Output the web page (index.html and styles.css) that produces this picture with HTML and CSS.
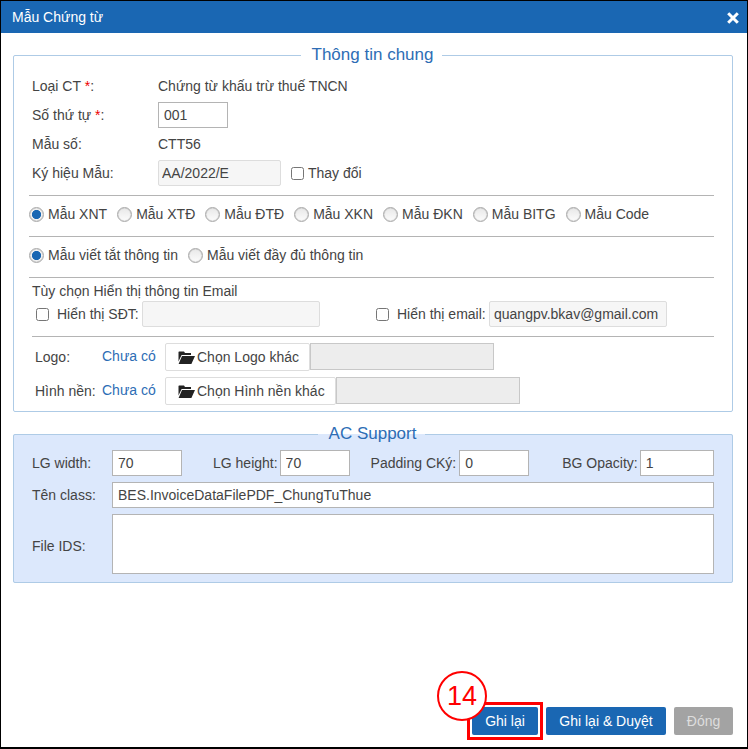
FILE: index.html
```html
<!DOCTYPE html>
<html lang="en">
<head>
    <meta charset="UTF-8">
    <meta name="viewport" content="width=device-width, initial-scale=1.0">
    <title>Mẫu Chứng từ</title>
    <link rel="stylesheet" href="styles.css">
</head>
<body>
    <div class="dialog">
        <div class="dialog-header">
            <span class="dialog-title">Mẫu Chứng từ</span>
            <svg class="close-icon" width="12" height="12" viewBox="0 0 12 12">
                <path d="M1.2 1.2L10.8 10.8M10.8 1.2L1.2 10.8" stroke="#fff" stroke-width="3" fill="none"/>
            </svg>
        </div>

        <fieldset class="group">
            <legend>Thông tin chung</legend>

            <div class="info-rows">
                <div class="row">
                    <span class="row-label">Loại CT <span class="req">*</span>:</span>
                    <span>Chứng từ khấu trừ thuế TNCN</span>
                </div>
                <div class="row">
                    <span class="row-label">Số thứ tự <span class="req">*</span>:</span>
                    <input class="field field-order" type="text" value="001">
                </div>
                <div class="row">
                    <span class="row-label">Mẫu số:</span>
                    <span>CTT56</span>
                </div>
                <div class="row">
                    <span class="row-label">Ký hiệu Mẫu:</span>
                    <input class="field field-readonly field-symbol" type="text" value="AA/2022/E" readonly>
                    <label class="check check-change"><input type="checkbox">Thay đổi</label>
                </div>
            </div>

            <div class="radio-row">
                <label class="radio"><input type="radio" name="tpl" checked>Mẫu XNT</label>
                <label class="radio"><input type="radio" name="tpl">Mẫu XTĐ</label>
                <label class="radio"><input type="radio" name="tpl">Mẫu ĐTĐ</label>
                <label class="radio"><input type="radio" name="tpl">Mẫu XKN</label>
                <label class="radio"><input type="radio" name="tpl">Mẫu ĐKN</label>
                <label class="radio"><input type="radio" name="tpl">Mẫu BITG</label>
                <label class="radio"><input type="radio" name="tpl">Mẫu Code</label>
            </div>

            <div class="radio-row">
                <label class="radio"><input type="radio" name="info" checked>Mẫu viết tắt thông tin</label>
                <label class="radio"><input type="radio" name="info">Mẫu viết đầy đủ thông tin</label>
            </div>

            <div class="email-block">
                <div class="email-title">Tùy chọn Hiển thị thông tin Email</div>
                <div class="email-row">
                    <label class="check check-phone"><input type="checkbox">Hiển thị SĐT:</label>
                    <input class="field field-readonly field-contact" type="text" readonly>
                    <label class="check check-email"><input type="checkbox">Hiển thị email:</label>
                    <input class="field field-readonly field-contact" type="text" value="quangpv.bkav@gmail.com" readonly>
                </div>
            </div>

            <div class="upload-block">
                <div class="upload-row">
                    <span class="upload-label">Logo:</span>
                    <a class="upload-link">Chưa có</a>
                    <button class="upload-btn" type="button">
                        <svg width="17" height="13" viewBox="0 0 17 13"><path d="M1 0.5h5l1 1.5h6v2H3.6L0.5 10.5V1zM4 5h13l-3.6 8H0.6z" fill="#222"/></svg>Chọn Logo khác
                    </button>
                    <input class="upload-path" type="text" readonly>
                </div>
                <div class="upload-row">
                    <span class="upload-label">Hình nền:</span>
                    <a class="upload-link">Chưa có</a>
                    <button class="upload-btn" type="button">
                        <svg width="17" height="13" viewBox="0 0 17 13"><path d="M1 0.5h5l1 1.5h6v2H3.6L0.5 10.5V1zM4 5h13l-3.6 8H0.6z" fill="#222"/></svg>Chọn Hình nền khác
                    </button>
                    <input class="upload-path" type="text" readonly>
                </div>
            </div>
        </fieldset>

        <fieldset class="group group-support">
            <legend>AC Support</legend>

            <div class="support-row">
                <span class="support-label">LG width:</span>
                <input class="field field-size" type="text" value="70">
                <span class="support-label-inline label-height">LG height:</span>
                <input class="field field-size" type="text" value="70">
                <span class="support-label-inline label-padding">Padding CKý:</span>
                <input class="field field-size" type="text" value="0">
                <span class="support-label-inline label-opacity">BG Opacity:</span>
                <input class="field field-opacity" type="text" value="1">
            </div>
            <div class="support-row">
                <span class="support-label">Tên class:</span>
                <input class="field field-wide" type="text" value="BES.InvoiceDataFilePDF_ChungTuThue">
            </div>
            <div class="support-row">
                <span class="support-label label-ids">File IDS:</span>
                <textarea class="field field-wide field-ids"></textarea>
            </div>
        </fieldset>

        <div class="dialog-footer">
            <span class="step-badge">14</span>
            <button class="btn btn-marked" type="button">Ghi lại</button>
            <button class="btn btn-approve" type="button">Ghi lại &amp; Duyệt</button>
            <button class="btn btn-disabled" type="button">Đóng</button>
        </div>
    </div>
</body>
</html>
```

FILE: styles.css
```css
* {
    box-sizing: border-box;
}

html, body {
    height: 100%;
}

body {
    margin: 0;
    font-family: 'Liberation Sans', Arial, sans-serif;
    font-size: 14px;
    color: #444;
    background-color: #fff;
}

.dialog {
    display: flex;
    flex-direction: column;
    height: 749px;
    border: 1px solid #000;
    border-bottom-width: 2px;
}

.dialog-header {
    display: flex;
    justify-content: space-between;
    align-items: center;
    height: 32px;
    padding: 0 8px 0 11px;
    background-color: #1a67b3;
    color: #fff;
}

.close-icon {
    margin-top: 1px;
}

.group {
    width: 720px;
    min-width: 0;
    margin: 12px 0 0 12px;
    padding: 8px 18px 6px 15px;
    border: 1px solid #aecbe6;
    border-radius: 2px;
}

.group legend {
    margin: 0 auto;
    padding: 0 9px 0 11px;
    font-size: 17px;
    line-height: 20px;
    color: #2d6db5;
}

.group-support {
    margin-top: 12px;
    padding: 6px 18px 8px 15px;
    background-color: #dce8fc;
}

.info-rows {
    display: flex;
    flex-direction: column;
    gap: 3px;
    padding-bottom: 9px;
    border-bottom: 1px solid #b4b4b4;
}

.row {
    display: flex;
    align-items: center;
    height: 26px;
    padding-left: 3px;
}

.row-label {
    width: 126px;
}

.req {
    color: #e00;
}

.field {
    height: 26px;
    padding: 0 5px;
    border: 1px solid #b4b4b4;
    font-family: inherit;
    font-size: 14px;
    color: #444;
    background-color: #fff;
}

.field-order {
    width: 70px;
}

.field-readonly {
    padding: 0 4px;
    border: 1px solid #ddd;
    border-radius: 2px;
    background-color: #f6f6f6;
}

.field-symbol {
    width: 123px;
    padding: 0 3px;
}

.check {
    display: flex;
    align-items: center;
}

.check input {
    width: 13px;
    height: 13px;
    margin: 0;
}

.check-change {
    margin-left: 10px;
    gap: 4px;
}

.radio-row {
    display: flex;
    align-items: center;
    gap: 10px;
    height: 41px;
    padding-bottom: 4px;
    border-bottom: 1px solid #b4b4b4;
}

.radio {
    display: flex;
    align-items: center;
    gap: 4px;
}

.radio input {
    appearance: none;
    width: 15px;
    height: 15px;
    margin: 0;
    border: 1px solid #aaa;
    border-radius: 50%;
    background: linear-gradient(#e8e8e8, #fcfcfc);
    box-shadow: inset 0 0 1px #888;
}

.radio input:checked {
    background: radial-gradient(circle, #1a67b3 0, #1a67b3 4.2px, #f2f2f2 5px);
}

.email-block {
    margin-left: 3px;
    padding-bottom: 9px;
    border-bottom: 1px solid #b4b4b4;
}

.email-title {
    height: 23px;
    padding-top: 3px;
    line-height: 20px;
}

.email-row {
    display: flex;
    align-items: center;
    height: 26px;
}

.check-phone {
    gap: 8px;
    width: 106px;
    margin-left: 4px;
}

.check-email {
    gap: 8px;
    width: 113px;
    margin-left: 56px;
}

.field-contact {
    width: 178px;
}

.upload-block {
    display: flex;
    flex-direction: column;
    gap: 6px;
    padding-top: 6px;
}

.upload-row {
    display: flex;
    align-items: flex-start;
    height: 28px;
}

.upload-label {
    width: 73px;
    padding-left: 6px;
    line-height: 28px;
}

.upload-link {
    width: 63px;
    line-height: 26px;
    color: #2d6db5;
}

.upload-btn {
    display: flex;
    align-items: center;
    gap: 2px;
    height: 28px;
    padding: 0 10px 0 12px;
    border: 1px solid #ddd;
    border-radius: 2px;
    background-color: #fff;
    font-family: inherit;
    font-size: 14px;
    color: #444;
}

.upload-path {
    width: 184px;
    height: 27px;
    border: 1px solid #c8c8c8;
    background-color: #ededed;
}

.support-row {
    display: flex;
    align-items: center;
    margin-bottom: 6px;
    padding-left: 3px;
    white-space: nowrap;
}

.support-row:last-child {
    margin-bottom: 0;
}

.support-label {
    flex-shrink: 0;
    width: 80px;
}

.label-ids {
    margin-top: 4px;
}

.support-label-inline {
    flex-shrink: 0;
    margin-right: 2px;
}

.label-height {
    margin-left: 31px;
}

.label-padding {
    margin-left: 21px;
    margin-right: 3px;
}

.label-opacity {
    margin-left: 33px;
}

.field-size {
    flex-shrink: 0;
    width: 70px;
}

.field-opacity {
    flex-shrink: 0;
    width: 74px;
}

.field-wide {
    flex: 1;
}

.field-ids {
    display: block;
    height: 60px;
    resize: none;
}

.dialog-footer {
    position: relative;
    display: flex;
    justify-content: flex-end;
    gap: 8px;
    margin-top: auto;
    padding: 0 14px 12px 0;
}

.btn {
    height: 28px;
    padding: 0;
    border: none;
    border-radius: 2px;
    background-color: #1a67b3;
    font-family: inherit;
    font-size: 14px;
    color: #fff;
}

.btn-marked {
    position: relative;
    width: 66px;
}

.btn-marked::after {
    content: "";
    position: absolute;
    inset: -5px;
    border: 3px solid #f00;
}

.btn-approve {
    width: 120px;
}

.btn-disabled {
    width: 59px;
    background-color: #a3a3a3;
    color: #ddd;
}

.step-badge {
    position: absolute;
    left: 436px;
    top: -36px;
    z-index: 1;
    width: 50px;
    height: 50px;
    border: 2px solid #f00;
    border-radius: 50%;
    background-color: #fff;
    font-size: 27px;
    line-height: 46px;
    text-align: center;
    color: #f00;
}
```
